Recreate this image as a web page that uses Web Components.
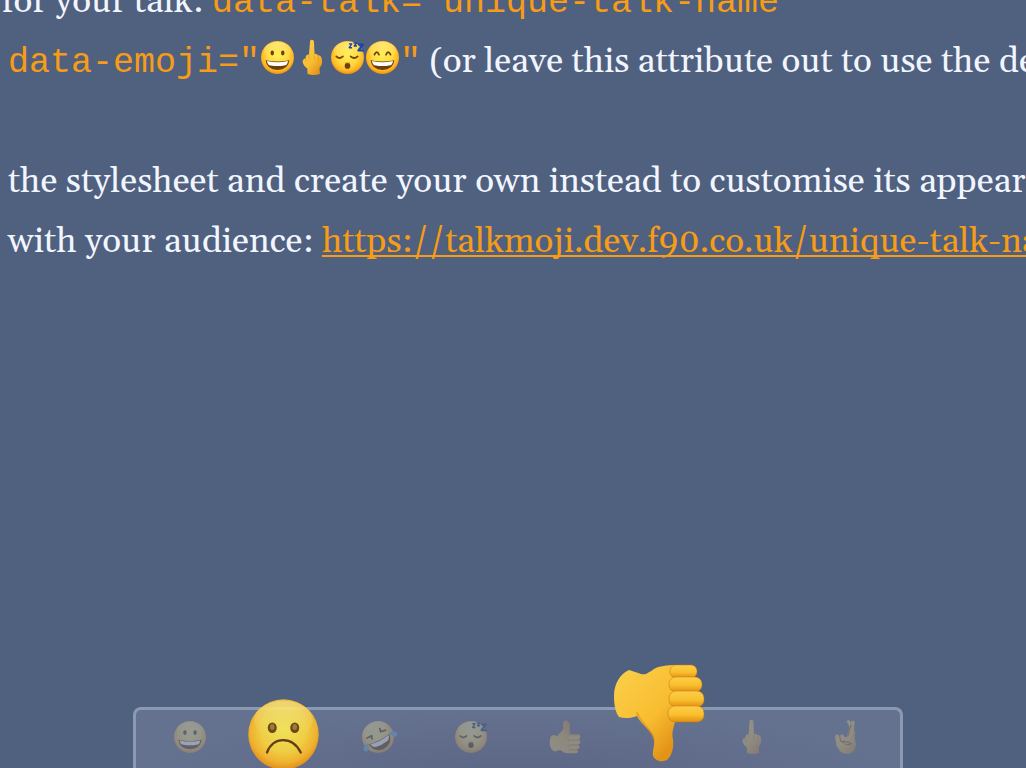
<!DOCTYPE html>
<html lang="en">
<head>
<meta charset="utf-8">
<meta name="viewport" content="width=device-width, initial-scale=1">
<title>Talkmoji</title>
<style>
  html, body { margin: 0; height: 100%; }
  body {
    overflow: hidden;
    background: #50607f;
    color: #f0f5fe;
    font-family: Gelasio, Georgia, "Liberation Serif", serif;
    --accent: #f69c16;
  }
</style>
</head>
<body>
<talk-slide>
  <talk-line>for your talk: <talk-code>data-talk="unique-talk-name"</talk-code></talk-line>
  <talk-line><talk-code>data-emoji="<emoji-icon name="grin"></emoji-icon><emoji-icon name="finger"></emoji-icon><emoji-icon name="sleep"></emoji-icon><emoji-icon name="smile"></emoji-icon>"</talk-code> (or leave this attribute out to use the default)</talk-line>
  <talk-line></talk-line>
  <talk-line>the stylesheet and create your own instead to customise its appearance</talk-line>
  <talk-line>with your audience: <talk-link href="https://talkmoji.dev.f90.co.uk/unique-talk-name">https://talkmoji.dev.f90.co.uk/unique-talk-name</talk-link></talk-line>
  <reaction-bar slot="reactions">
    <reaction-button name="grin" label="Grinning"></reaction-button>
    <reaction-button name="frown" label="Frowning" active></reaction-button>
    <reaction-button name="rofl" label="Laughing"></reaction-button>
    <reaction-button name="sleep" label="Sleeping"></reaction-button>
    <reaction-button name="up" label="Thumbs up"></reaction-button>
    <reaction-button name="down" label="Thumbs down" active></reaction-button>
    <reaction-button name="finger" label="Middle finger"></reaction-button>
    <reaction-button name="crossed" label="Fingers crossed"></reaction-button>
  </reaction-bar>
</talk-slide>

<script>
const face = `<circle cx="50" cy="50" r="47" fill="url(#face)"/><ellipse cx="50" cy="31" rx="39" ry="26" fill="url(#shine)"/>`;
const thumb = `
  <path d="M20 7 C11 11 5 21 5 33 C5 43 7 50 10 54 C16 56 23 55 28 53 C33 63 43 67 45 76 C46 84 43 87 44 93 C47 99 54 99 58 97 C63 92 65 85 64 76 C62 69 66 60 67 56 L67 2 C58 2 50 3 45 6 C39 10 37 12 32 11 C27 9 23 8 20 7Z" fill="url(#hand)"/>
  <path d="M28 50 C33 62 43 66 45 77" fill="none" stroke="#d88a10" stroke-opacity=".5" stroke-width="2" stroke-linecap="round"/>
  <g fill="url(#finger)" stroke="#c57a0b" stroke-opacity=".5" stroke-width="1">
    <rect x="61" y="2" width="27" height="13" rx="6"/>
    <rect x="60" y="14" width="33" height="15" rx="7"/>
    <rect x="60" y="28" width="35" height="16" rx="7"/>
    <rect x="59" y="43" width="36" height="16" rx="7"/>
  </g>`;
const closedEyes = `<path d="M18 47 Q27 56 37 47 M59 47 Q69 56 79 47" fill="none" stroke="#74420a" stroke-width="5" stroke-linecap="round"/>`;
const grinMouth = `<path d="M16 58 Q50 65 84 58 Q81 85 50 86 Q19 85 16 58Z" fill="#70400c"/><path d="M20 60 Q50 67 80 60 Q79 72 69 73 Q50 76 31 73 Q21 72 20 60Z" fill="#fff"/>`;
const art = {
  grin: `${face}<ellipse cx="35" cy="37" rx="5" ry="7" fill="#70400c"/><ellipse cx="65" cy="37" rx="5" ry="7" fill="#70400c"/>${grinMouth}`,
  smile: `${face}<path d="M27 42 Q34 27 40 42 M60 42 Q66 27 73 42" fill="none" stroke="#70400c" stroke-width="5" stroke-linecap="round"/>${grinMouth}`,
  frown: `${face}<g fill="#704309"><ellipse cx="35" cy="41" rx="6" ry="7"/><ellipse cx="65" cy="41" rx="6" ry="7"/></g><g fill="#a17b37"><ellipse cx="35" cy="40" rx="3" ry="4"/><ellipse cx="65" cy="40" rx="3" ry="4"/></g><path d="M28 74 C36 52 62 52 73 74" fill="none" stroke="#61380b" stroke-width="3" stroke-linecap="round"/>`,
  sleep: `${face}${closedEyes}<ellipse cx="50" cy="74" rx="8" ry="8" fill="#70400c"/><path d="M43 66 L57 66" stroke="#a35c09" stroke-width="2"/><g fill="none" stroke="#1745ad" stroke-linejoin="round"><path d="M54 11 H62 L55 22 H63" stroke-width="4"/><path d="M67 9 H76 L69 17 H77" stroke-width="4"/><path d="M80 13 H94 L81 30 H96" stroke-width="6"/></g>`,
  rofl: `<g transform="rotate(-27 50 50)">${face}<path d="M20 38 H35 L32 47 M66 30 L64 40 L79 42" fill="none" stroke="#70400c" stroke-width="5" stroke-linecap="round" stroke-linejoin="round"/><path d="M16 57 Q50 65 84 57 Q81 88 50 89 Q19 88 16 57Z" fill="#70400c"/><path d="M20 59 Q50 66 80 59 Q79 70 69 73 Q50 77 31 73 Q21 70 20 59Z" fill="#fff"/><path d="M15 54 C4 52 -8 60 -4 69 C1 79 15 69 15 54Z M85 54 C96 52 108 60 104 69 C99 79 85 69 85 54Z" fill="#4cb9f2"/></g>`,
  down: thumb,
  up: `<g transform="translate(0 100) scale(1 -1)">${thumb}</g>`,
  finger: `<path d="M43 3 Q48 -4 54 3 L56 41 Q62 37 65 44 Q73 42 76 51 Q81 70 70 79 L71 97 Q53 103 36 97 L35 81 Q23 73 22 62 Q22 54 30 53 Q31 40 40 42Z" fill="url(#hand)"/><path d="M31 53 L31 62 M40 45 L40 54 M55 45 L56 57 M66 47 L66 58" fill="none" stroke="#c8790b" stroke-opacity=".5" stroke-width="2" stroke-linecap="round"/>`,
  crossed: `<path d="M52 4 Q57 -2 62 4 L78 38 L76 53 L63 53 L65 30Z" fill="url(#hand)"/><path d="M53 50 L64 6 Q70 -1 76 5 L71 45 Q82 65 78 80 Q72 98 57 99 Q40 101 31 90 L22 76 L18 50 Q18 42 24 43 Q29 42 31 50 Q33 41 41 43 L47 51Z" fill="url(#hand)"/><path d="M56 46 L65 14 M32 49 L34 61 Q40 66 45 61 M40 66 Q54 61 66 70 Q54 75 47 70" fill="none" stroke="#a46a16" stroke-width="3" stroke-linecap="round"/>`
};
const defs = `<defs>
  <radialGradient id="face" cx=".5" cy=".43" r=".57"><stop stop-color="#ffed50"/><stop offset=".55" stop-color="#ffd83d"/><stop offset=".82" stop-color="#ffba25"/><stop offset="1" stop-color="#ee9213"/></radialGradient>
  <linearGradient id="shine" x2="0" y2="1"><stop stop-color="#fff9bb" stop-opacity=".5"/><stop offset="1" stop-color="#fff36b" stop-opacity="0"/></linearGradient>
  <linearGradient id="hand" x2=".7" y2="1"><stop stop-color="#fbd14c"/><stop offset=".65" stop-color="#f8bd31"/><stop offset="1" stop-color="#e39418"/></linearGradient>
  <linearGradient id="finger" x2="0" y2="1"><stop stop-color="#fdce48"/><stop offset=".55" stop-color="#f9bf2e"/><stop offset="1" stop-color="#e28e14"/></linearGradient>
</defs>`;

class Base extends HTMLElement {
  constructor() { super(); this.attachShadow({ mode: "open" }); }
  connectedCallback() { this.shadowRoot.innerHTML = this.view(); }
}

customElements.define("emoji-icon", class extends Base {
  view() {
    return `<style>
      :host { display: inline-block; width: var(--emoji-size, 35px); height: var(--emoji-size, 35px); vertical-align: -3px; line-height: 0; }
      svg { display: block; width: 100%; height: 100%; overflow: visible; }
    </style><svg viewBox="0 0 100 100" aria-hidden="true">${defs}${art[this.getAttribute("name")]}</svg>`;
  }
});

customElements.define("talk-code", class extends Base {
  view() {
    return `<style>
      :host { display: inline; }
      code { font: 35px "Liberation Mono", monospace; line-height: 1; color: var(--accent); }
    </style><code><slot></slot></code>`;
  }
});

customElements.define("talk-link", class extends Base {
  view() {
    return `<style>
      :host { display: inline; }
      a { color: var(--accent); text-decoration: underline; text-decoration-thickness: 2px; text-underline-offset: 3px; text-decoration-skip-ink: none; }
    </style><a href="${this.getAttribute("href")}"><slot></slot></a>`;
  }
});

customElements.define("talk-line", class extends Base {
  view() {
    return `<style>
      :host { display: block; height: 60px; line-height: 60px; white-space: nowrap; }
    </style><slot></slot>`;
  }
});

customElements.define("talk-slide", class extends Base {
  view() {
    return `<style>
      :host { display: flex; flex-direction: column; height: 100%; overflow: hidden; }
      main { flex: 1; min-height: 0; margin-top: -28px; padding-left: 8px; font-size: 35px; }
      main ::slotted(talk-line:first-child) { margin-left: -6px; }
    </style><main><slot></slot></main><slot name="reactions"></slot>`;
  }
});

customElements.define("reaction-bar", class extends Base {
  view() {
    return `<style>
      :host { display: block; box-sizing: border-box; height: 61px; margin: 0 12% 0 13%; border: 3px solid #8b9ab3; border-bottom: 0; border-radius: 8px 8px 0 0; background: radial-gradient(ellipse at 50% 120%, #5c6684, #64718f 70%); }
      div { display: flex; height: 100%; padding: 0 7px; }
    </style><div role="group" aria-label="Reactions"><slot></slot></div>`;
  }
});

customElements.define("reaction-button", class extends Base {
  view() {
    const name = this.getAttribute("name");
    return `<style>
      :host { display: block; flex: 1; min-width: 0; }
      button { position: relative; display: flex; align-items: center; justify-content: center; width: 100%; height: 54px; padding: 0; border: 0; background: none; cursor: pointer; }
      emoji-icon { --emoji-size: 34px; opacity: .35; filter: saturate(.6); flex: none; }
      :host([active]) emoji-icon { position: absolute; opacity: 1; filter: none; }
      :host([name=frown]) emoji-icon { --emoji-size: 75px; bottom: -8px; opacity: .9; }
      :host([name=down]) emoji-icon { --emoji-size: 100px; bottom: 1px; }
    </style><button type="button" aria-label="${this.getAttribute("label")}"><emoji-icon name="${name}"></emoji-icon></button>`;
  }
});
</script>
</body>
</html>
